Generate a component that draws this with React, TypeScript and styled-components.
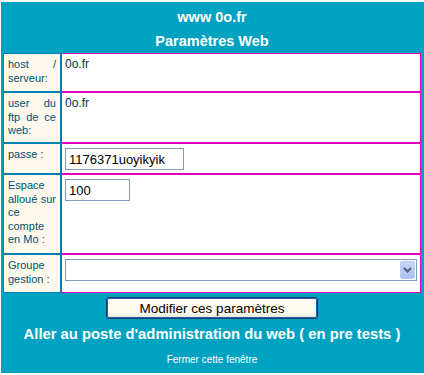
import React from 'react';
import styled, { createGlobalStyle } from 'styled-components';

const GlobalStyle = createGlobalStyle`
  body {
    margin: 0;
    background: #ffffff;
    font-family: "Liberation Sans", Arial, sans-serif;
  }
`;

const Page = styled.div`
  box-sizing: border-box;
  margin: 2px 0 0 1px;
  width: 423px;
  height: 371px;
  padding: 3px 3px 0 2px;
  background: #00a2c2;
  display: flex;
  flex-direction: column;
  align-items: center;
`;

const Title = styled.div`
  width: 100%;
  text-align: center;
  color: #ffffff;
  font-family: "Liberation Sans", Arial, sans-serif;
  font-weight: bold;
  font-size: 14.5px;
  line-height: 24px;
`;

const Table = styled.div`
  width: 418px;
  display: grid;
  grid-template-columns: 58px 1fr;
  grid-template-rows: 39px 51px 31px 80px 39px;
`;

const LabelCell = styled.div`
  box-sizing: border-box;
  border: 1px solid #0082b4;
  background: #fff8ec;
  padding: 4px 4px 0 4px;
  font-family: "Liberation Sans", Arial, sans-serif;
  font-size: 11px;
  line-height: 13.5px;
  text-align: justify;
  color: #00506e;
  overflow: hidden;
`;

const ValueCell = styled.div`
  box-sizing: border-box;
  border: 1px solid #e000c0;
  background: #ffffff;
  padding: 3px;
  font-family: "Liberation Sans", Arial, sans-serif;
  font-size: 12px;
  line-height: 14px;
  color: #003848;
`;

const TextInput = styled.input<{ $w: number }>`
  box-sizing: border-box;
  display: block;
  margin: 1px 0 0 0;
  width: ${(p) => p.$w}px;
  height: 22px;
  padding: 1px 3px;
  border: 1px solid #7f9db9;
  background: #ffffff;
  font-family: "Liberation Sans", Arial, sans-serif;
  font-size: 13px;
  color: #000000;
  outline: none;
`;

const SelectBox = styled.div`
  position: relative;
  box-sizing: border-box;
  margin-top: 1px;
  height: 22px;
  border: 1px solid #7f9db9;
  background: #ffffff;
`;

const Select = styled.select`
  appearance: none;
  box-sizing: border-box;
  width: 100%;
  height: 100%;
  border: none;
  background: transparent;
  font-family: "Liberation Sans", Arial, sans-serif;
  font-size: 12px;
  outline: none;
`;

const SelectArrow = styled.span`
  position: absolute;
  top: 1px;
  right: 1px;
  width: 15px;
  height: 18px;
  box-sizing: border-box;
  border: 1px solid #bccdf0;
  border-radius: 2px;
  background: linear-gradient(#c6d6f8, #a9c1f2);
  display: flex;
  align-items: center;
  justify-content: center;
  pointer-events: none;
`;

const Button = styled.button`
  box-sizing: border-box;
  margin-top: 4px;
  width: 212px;
  height: 22px;
  padding: 0;
  border: 1px solid #003c74;
  border-radius: 3px;
  box-shadow: inset 0 0 0 1px #2c5aa8;
  background: linear-gradient(#fffdf6 0%, #fdf9ee 75%, #d8e8d0 100%);
  font-family: "Liberation Sans", Arial, sans-serif;
  font-size: 13.5px;
  color: #000000;
`;

const AdminLink = styled.div`
  margin-top: 5px;
  color: #ffffff;
  font-family: "Liberation Sans", Arial, sans-serif;
  font-weight: bold;
  font-size: 14.8px;
  line-height: 20px;
`;

const CloseLink = styled.div`
  margin-top: 6px;
  color: #ffffff;
  font-family: "Liberation Sans", Arial, sans-serif;
  font-size: 10px;
  line-height: 20px;
`;

const App: React.FC = () => {
  return (
    <>
      <GlobalStyle />
      <Page>
        <Title>www 0o.fr</Title>
        <Title>Paramètres Web</Title>
        <Table>
          <LabelCell>host / serveur:</LabelCell>
          <ValueCell>0o.fr</ValueCell>

          <LabelCell>user du ftp de ce web:</LabelCell>
          <ValueCell>0o.fr</ValueCell>

          <LabelCell>passe :</LabelCell>
          <ValueCell>
            <TextInput $w={119} type="text" defaultValue="1176371uoyikyik" />
          </ValueCell>

          <LabelCell>Espace alloué sur ce compte en Mo :</LabelCell>
          <ValueCell>
            <TextInput $w={65} type="text" defaultValue="100" />
          </ValueCell>

          <LabelCell>Groupe gestion :</LabelCell>
          <ValueCell>
            <SelectBox>
              <Select defaultValue="">
                <option value=""></option>
              </Select>
              <SelectArrow>
                <svg width="9" height="6" viewBox="0 0 9 6">
                  <path d="M1 1 L4.5 4.5 L8 1" fill="none" stroke="#4d6185" strokeWidth="2" />
                </svg>
              </SelectArrow>
            </SelectBox>
          </ValueCell>
        </Table>
        <Button type="button">Modifier ces paramètres</Button>
        <AdminLink>Aller au poste d'administration du web ( en pre tests )</AdminLink>
        <CloseLink>Fermer cette fenêtre</CloseLink>
      </Page>
    </>
  );
};

export default App;
